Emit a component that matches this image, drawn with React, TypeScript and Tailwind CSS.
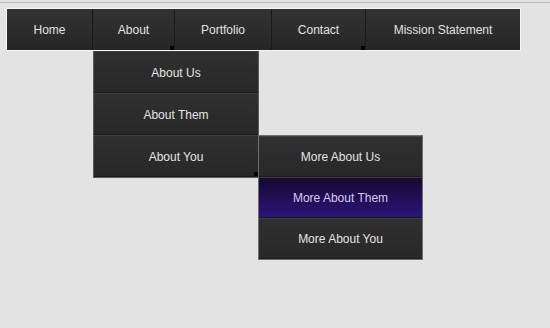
import React from "react"

type Item = { label: string; width: number; marker?: boolean }

const font = { fontFamily: '"Liberation Sans", Arial, sans-serif' }

function Marker() {
  return <span className="absolute right-0 bottom-0 h-[4px] w-[4px] bg-black" />
}

function Row({
  label,
  active,
  marker,
  short,
  children,
}: {
  label: string
  active?: boolean
  marker?: boolean
  short?: boolean
  children?: React.ReactNode
}) {
  const base = short
    ? "relative flex h-[41px] items-center justify-center border-t border-t-[#3f3f3f] border-b border-b-[#1b1b1b] pt-px"
    : "relative flex h-[42px] items-center justify-center border-t border-t-[#3f3f3f] border-b border-b-[#1b1b1b] pt-px"
  return (
    <li
      className={
        active
          ? base + " bg-linear-to-b from-[#170833] to-[#2b1478] text-[#d4cdf0]"
          : base + " bg-linear-to-b from-[#303030] to-[#282828] text-[#e4e4e4]"
      }
    >
      {label}
      {marker && <Marker />}
      {children}
    </li>
  )
}

export default function App() {
  const items: Item[] = [
    { label: "Home", width: 85 },
    { label: "About", width: 81, marker: true },
    { label: "Portfolio", width: 96 },
    { label: "Contact", width: 93, marker: true },
  ]

  return (
    <div className="h-[328px] w-[550px] overflow-hidden bg-[#e3e3e3] text-[12px]" style={font}>
      <div className="mt-[2px] h-px bg-[#b9b9b9]" />
      <nav className="ml-[6px] mt-[5px] w-[515px] border border-[#f6f6f6]">
        <ul className="flex h-[41px] bg-linear-to-b from-[#333333] to-[#262626] text-[#e2e2e2]">
          {items.map((item) => (
            <li
              key={item.label}
              className="relative flex items-center justify-center border-r border-r-[#1a1a1a] pt-px"
              style={{ width: item.width + 1 }}
            >
              {item.label}
              {item.marker && <Marker />}
              {item.label === "About" && (
                <ul className="absolute top-[42px] left-0 z-10 w-[166px] border-x border-b border-[#5c5c5c]">
                  <Row label="About Us" />
                  <Row label="About Them" />
                  <Row label="About You" marker>
                    <ul className="absolute top-[-1px] left-[164px] w-[165px] border border-[#6e6e6e]">
                      <Row label="More About Us" short />
                      <Row label="More About Them" active short />
                      <Row label="More About You" short />
                    </ul>
                  </Row>
                </ul>
              )}
            </li>
          ))}
          <li className="flex flex-1 items-center justify-center pt-px">Mission Statement</li>
        </ul>
      </nav>
    </div>
  )
}
